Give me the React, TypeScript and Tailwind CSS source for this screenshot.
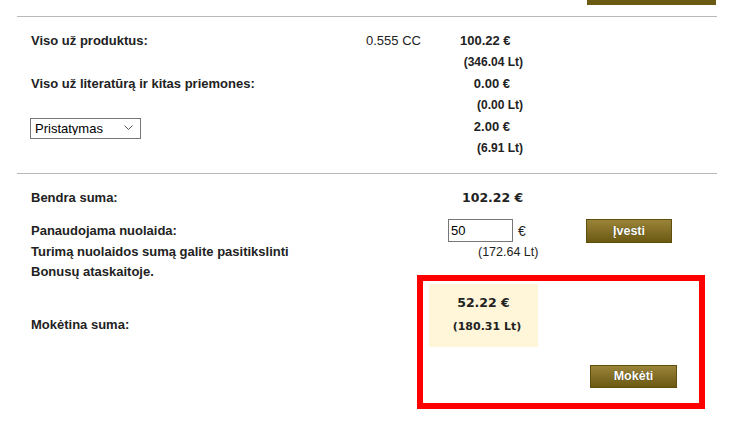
const olive = 'bg-gradient-to-b from-[#9a8438] to-[#6b5912] border border-[#5f4f0f] text-white font-bold text-[12.5px] [text-shadow:0_0_1px_#3b3310]';

const App = () => {
  return (
    <div className="relative w-[739px] h-[431px] bg-white text-[#222] font-['Liberation_Sans',Arial,sans-serif] overflow-hidden">
      <div className="ml-[587px] h-[5px] w-[129px] bg-[#6b5a14]" />

      <div className="ml-[17px] w-[700px] mt-[11px] border-t border-[#b9b9b9]">
        {/* sumos */}
        <section className="pt-[13px] pb-[13px] pl-[14px] leading-[21.6px] border-b border-[#b9b9b9]">
          <div className="flex h-[21.6px] items-center">
            <div className="w-[335px] font-bold text-[13px]">Viso už produktus:</div>
            <div className="w-[94px] text-[13px]">0.555 CC</div>
            <div className="w-[50px] text-right font-bold text-[13px] whitespace-nowrap">100.22 €</div>
          </div>
          <div className="w-[492px] h-[21.6px] text-right font-bold text-[12px]">(346.04 Lt)</div>

          <div className="flex h-[21.6px] items-center">
            <div className="w-[429px] font-bold text-[13px]">Viso už literatūrą ir kitas priemones:</div>
            <div className="w-[50px] text-right font-bold text-[13px] whitespace-nowrap">0.00 €</div>
          </div>
          <div className="w-[492px] h-[21.6px] text-right font-bold text-[12px]">(0.00 Lt)</div>

          <div className="flex h-[21.6px] items-center">
            <div className="w-[429px]">
              <div className="relative w-[111px] h-[21px] -ml-px">
                <select className="appearance-none w-full h-full border border-[#767676] bg-white pl-[4px] text-[13px] text-black leading-none outline-none">
                  <option>Pristatymas</option>
                </select>
                <svg className="absolute right-[8px] top-[8px] pointer-events-none" width="9" height="5" viewBox="0 0 9 5">
                  <path d="M0.5 0.5 L4.5 4.5 L8.5 0.5" fill="none" stroke="#555" strokeWidth="1" />
                </svg>
              </div>
            </div>
            <div className="w-[50px] text-right font-bold text-[13px] whitespace-nowrap">2.00 €</div>
          </div>
          <div className="w-[492px] h-[21.6px] text-right font-bold text-[12px]">(6.91 Lt)</div>
        </section>

        {/* mokejimas */}
        <section className="pt-[14px] pl-[14px] leading-[20px] text-[13px]">
          <div className="flex h-[20px] items-center">
            <div className="w-[398px] font-bold">Bendra suma:</div>
            <div className="ml-[33px] font-bold font-['DejaVu_Sans',Verdana,sans-serif] text-[12.5px] whitespace-nowrap">102.22 €</div>
          </div>

          <div className="flex h-[22px] items-center mt-[12px]">
            <div className="w-[398px] font-bold">Panaudojama nuolaida:</div>
            <div className="w-[157px] flex items-center">
              <input
                defaultValue="50"
                className="ml-[19px] w-[65px] h-[23px] border border-[#767676] px-[2px] text-[13px] text-black outline-none"
              />
              <span className="ml-[5px] text-[14px]">€</span>
            </div>
            <button className={`w-[86px] h-[24px] ${olive}`}>Įvesti</button>
          </div>

          <div className="flex h-[20px] items-center">
            <div className="w-[398px] font-bold whitespace-nowrap">Turimą nuolaidos sumą galite pasitikslinti</div>
            <div className="ml-[49px] text-[12.5px] whitespace-nowrap">(172.64 Lt)</div>
          </div>

          <div className="h-[20px] font-bold">Bonusų ataskaitoje.</div>

          <div className="flex items-start mt-[2px]">
            <div className="w-[398px] pt-[31px] font-bold">Mokėtina suma:</div>
            <div className="w-[109px] h-[63px] bg-[#fff6d9] pt-[9px] flex flex-col items-center font-bold font-['DejaVu_Sans',Verdana,sans-serif]">
              <div className="h-[20px] text-[12.5px] whitespace-nowrap">52.22 €</div>
              <div className="h-[20px] mt-[4px] pl-[7px] text-[11px] whitespace-nowrap">(180.31 Lt)</div>
            </div>
          </div>

          <div className="flex mt-[18px]">
            <button className={`ml-[559px] w-[87px] h-[23px] ${olive}`}>Mokėti</button>
          </div>
        </section>
      </div>

      {/* pažymėta sritis */}
      <div className="absolute left-[417px] top-[275px] w-[288px] h-[134px] border-[6px] border-[#ff0000] pointer-events-none" />
    </div>
  );
};

export default App;
